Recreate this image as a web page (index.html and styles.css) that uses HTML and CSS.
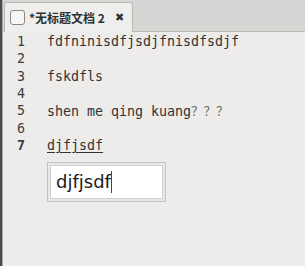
FILE: index.html
```html
<!DOCTYPE html>
<html lang="zh-CN">
<head>
  <meta charset="UTF-8" />
  <title>无标题文档 2</title>
  <link rel="stylesheet" href="styles.css">
</head>
<body>
  <div class="window">
    <div class="edge"></div>
    <div class="main">
      <div class="tabbar">
        <div class="tab">
          <span class="tab-icon"></span>
          <span class="tab-title">*无标题文档 2</span>
          <span class="tab-close">✖</span>
        </div>
      </div>

      <div class="editor">
        <div class="line"><span class="num">1</span><span class="text">fdfninisdfjsdjfnisdfsdjf</span></div>
        <div class="line"><span class="num">2</span><span class="text"></span></div>
        <div class="line"><span class="num">3</span><span class="text">fskdfls</span></div>
        <div class="line"><span class="num">4</span><span class="text"></span></div>
        <div class="line"><span class="num">5</span><span class="text">shen me qing kuang<span class="cjk">？？？</span></span></div>
        <div class="line"><span class="num">6</span><span class="text"></span></div>
        <div class="line current"><span class="num">7</span><span class="text preedit">djfjsdf</span></div>

        <!-- input method popup -->
        <div class="ime">
          <div class="ime-field">djfjsdf<span class="caret"></span></div>
        </div>
      </div>
    </div>
  </div>
</body>
</html>
```

FILE: styles.css
```css
html, body {
  margin: 0; padding: 0;
  width: 100%;
  height: 100%;
  overflow: hidden;
  background: #edecea;
}

.window {
  display: flex;
  width: 305px;
  height: 266px;
}

.edge {
  width: 2px;
  flex-shrink: 0;
  background: #4a4a4a;
  border-right: 1px solid #a9a9a7;
}

.main {
  flex: 1;
  display: flex;
  flex-direction: column;
}

.tabbar {
  height: 32px;
  background: #d6d6d4;
  border-bottom: 1px solid #b9b9b6;
  box-sizing: border-box;
  padding: 2px 0 0 1px;
  display: flex;
}

.tab {
  width: 129px;
  height: 30px;
  box-sizing: border-box;
  overflow: hidden;
  background: #efeeec;
  border: 1px solid #b7b7b4;
  border-bottom: none;
  border-radius: 3px 3px 0 0;
  display: flex;
  align-items: center;
  padding: 0 0 1px 5px;
  font-family: "Noto Sans CJK SC", "DejaVu Sans", sans-serif;
  color: #2e3436;
}

.tab-icon {
  flex-shrink: 0;
  width: 13px;
  height: 13px;
  border: 1px solid #8a8a88;
  border-radius: 3px;
  background: #f7f7f6;
  margin-right: 4px;
}

.tab-title {
  white-space: nowrap;
  font-size: 12px;
  font-weight: bold;
}

.tab-close {
  font-family: "DejaVu Sans", sans-serif;
  font-size: 11px;
  margin-left: 10px;
  color: #2e3436;
}

.editor {
  position: relative;
  flex: 1;
  padding-top: 1px;
  font-family: "DejaVu Sans Mono", monospace;
  font-size: 13.3px;
  color: #2e3436;
}

.line {
  display: grid;
  grid-template-columns: 44px 1fr;
  height: 17.33px;
  line-height: 17.33px;
}

.num {
  padding-left: 14px;
  color: #3c3c3c;
}

.current .num {
  font-weight: bold;
}

.cjk {
  font-family: "Noto Sans CJK SC", sans-serif;
  font-size: 12.5px;
  color: #6a6c68;
}

.preedit {
  text-decoration: underline;
  text-underline-offset: 2px;
}

.ime {
  position: absolute;
  left: 44px;
  top: 130px;
  width: 119px;
  height: 40px;
  box-sizing: border-box;
  border: 1px solid #c3c3c1;
  background: #e8e8e6;
  padding: 2px;
}

.ime-field {
  height: 100%;
  box-sizing: border-box;
  background: #fff;
  border: 1px solid #d0d0ce;
  padding-left: 5px;
  font-family: "DejaVu Sans", sans-serif;
  font-size: 18px;
  line-height: 32px;
  color: #1a1a1a;
  display: flex;
  align-items: center;
}

.caret {
  display: inline-block;
  width: 1px;
  height: 22px;
  background: #c01010;
}
```
